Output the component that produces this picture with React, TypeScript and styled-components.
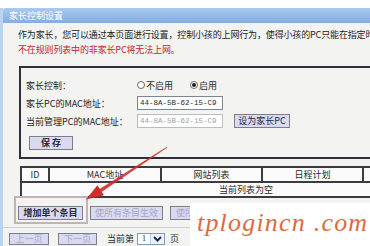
import React from 'react';
import styled, { createGlobalStyle } from 'styled-components';

const GlobalStyle = createGlobalStyle`
  html, body {
    margin: 0;
    padding: 0;
  }
  body {
    width: 370px;
    height: 246px;
    overflow: hidden;
    background: #ffffff;
    font-family: "Noto Sans CJK SC", "Liberation Sans", sans-serif;
  }
`;

const Page = styled.div`
  position: relative;
  width: 370px;
  height: 246px;
  overflow: hidden;
  box-sizing: border-box;
  padding-top: 8px;
  background: #ffffff;
  font-size: 9px;
  color: #2a2a2a;
`;

const Panel = styled.div`
  height: 238px;
  display: flex;
  flex-direction: column;
  background: #f3f3f1;
  border-left: 3px solid #bcd3ee;
`;

const TitleBar = styled.div`
  height: 15px;
  line-height: 15px;
  padding-left: 6px;
  color: #ffffff;
  background: linear-gradient(#a9c9f0, #84ade2);
  border-top-left-radius: 3px;
`;

const Body = styled.div`
  padding: 4px 0 0 15px;
`;

const Intro = styled.p<{ $warn?: boolean }>`
  margin: 0;
  line-height: 15px;
  white-space: nowrap;
  letter-spacing: -0.15px;
  color: ${p => (p.$warn ? '#c4262b' : '#222')};
`;

const ControlBox = styled.div`
  width: 420px;
  margin: 9px 0 0 1px;
  padding: 8px 0 9px 5px;
  border: 2px solid #2e2e38;
  display: grid;
  grid-template-columns: 111px auto;
  grid-auto-rows: 18px;
  align-items: center;
`;

const Label = styled.span`
  white-space: nowrap;
  color: #222;
`;

const Field = styled.div`
  display: flex;
  align-items: center;
`;

const RadioOption = styled.span`
  display: inline-flex;
  align-items: center;
  gap: 1px;
  margin-right: 17px;
`;

const RadioDot = styled.span<{ $checked?: boolean }>`
  width: 8px;
  height: 8px;
  box-sizing: border-box;
  border-radius: 50%;
  border: 1px solid #6a6a6a;
  background: #ffffff;
  display: inline-flex;
  align-items: center;
  justify-content: center;
  &::after {
    content: '';
    width: 4px;
    height: 4px;
    border-radius: 50%;
    background: ${p => (p.$checked ? '#1e1e1e' : 'transparent')};
  }
`;

const MacInput = styled.input<{ $muted?: boolean }>`
  width: 86px;
  height: 14px;
  box-sizing: border-box;
  padding: 0 2px;
  margin: 0;
  border: 1px solid ${p => (p.$muted ? '#b9bcc2' : '#7c8592')};
  background: #ffffff;
  font-family: "Liberation Mono", monospace;
  font-size: 7.5px;
  color: ${p => (p.$muted ? '#a2a2a2' : '#2a2a2a')};
  outline: none;
`;

const Button = styled.button<{ $width: number; $muted?: boolean; $bold?: boolean }>`
  width: ${p => p.$width}px;
  height: 14px;
  padding: 0;
  margin: 0;
  box-sizing: border-box;
  border: 1px solid #7d7d8e;
  background: #d9d9f0;
  font-family: "Noto Sans CJK SC", "Liberation Sans", sans-serif;
  font-size: 9px;
  line-height: 12px;
  font-weight: ${p => (p.$bold ? 700 : 400)};
  color: ${p => (p.$muted ? '#a7a7c9' : '#2a2a3a')};
  white-space: nowrap;
  overflow: hidden;
`;

const SetButton = styled(Button)`
  margin-left: 11px;
`;

const SaveRow = styled.div`
  grid-column: 1 / span 2;
  padding-left: 3px;
  align-self: end;
  margin-bottom: -2px;
`;

const RuleTable = styled.table`
  width: 440px;
  margin: 7px 0 0 2px;
  border-collapse: collapse;
  table-layout: fixed;
  background: #fbfbfb;
  td,
  th {
    height: 13px;
    padding: 0;
    border: 2px solid #3b3b42;
    font-weight: 400;
    font-size: 9px;
    line-height: 11px;
    text-align: center;
    white-space: nowrap;
  }
`;

const EmptyCell = styled.td`
  text-align: left !important;
  padding-left: 197px !important;
`;

const ActionRow = styled.div`
  display: flex;
  gap: 7px;
  margin-top: 8px;
`;

const Callout = styled.span`
  position: relative;
  display: inline-flex;
  &::before {
    content: '';
    position: absolute;
    top: -10px;
    left: -4px;
    right: -5px;
    bottom: -4px;
    border: 2px solid #c2b3b8;
    pointer-events: none;
  }
`;

const Footer = styled.div`
  margin-top: 7px;
  border-top: 1px solid #cfcfcf;
  padding: 4px 0 0 6px;
  display: flex;
  align-items: center;
  white-space: nowrap;
`;

const NavButton = styled(Button)`
  height: 12px;
  line-height: 10px;
  margin-right: 9px;
`;

const PageText = styled.span`
  margin-left: 1px;
`;

const PageSelect = styled.span`
  display: inline-flex;
  align-items: stretch;
  height: 12px;
  box-sizing: border-box;
  margin: 0 5px 0 3px;
  border: 1px solid #7f9db9;
  background: #ffffff;
`;

const SelectValue = styled.span`
  width: 12px;
  font-family: "Liberation Serif", serif;
  font-size: 8px;
  line-height: 10px;
  text-align: center;
`;

const SelectArrow = styled.span`
  width: 13px;
  display: inline-flex;
  align-items: center;
  justify-content: center;
  border-left: 1px solid #b7c6d8;
  background: #eef2f8;
`;

const Watermark = styled.div`
  position: absolute;
  right: 0;
  bottom: 0;
  width: 180px;
  height: 43px;
  background: #ffffff;
  padding-left: 7px;
  box-sizing: border-box;
  font-family: "Liberation Serif", serif;
  font-style: italic;
  font-size: 26px;
  line-height: 40px;
  letter-spacing: 1.2px;
  color: #dd6a41;
  white-space: pre;
`;

const ArrowLayer = styled.svg`
  position: absolute;
  left: 0;
  top: 0;
  pointer-events: none;
`;

export default function App() {
  return (
    <Page>
      <GlobalStyle />
      <Panel>
        <TitleBar>家长控制设置</TitleBar>
        <Body>
          <Intro>作为家长，您可以通过本页面进行设置，控制小孩的上网行为，使得小孩的PC只能在指定时间访问指定的网站。</Intro>
          <Intro $warn>不在规则列表中的非家长PC将无法上网。</Intro>

          <ControlBox>
            <Label>家长控制：</Label>
            <Field>
              <RadioOption>
                <RadioDot />
                不启用
              </RadioOption>
              <RadioOption>
                <RadioDot $checked />
                启用
              </RadioOption>
            </Field>

            <Label>家长PC的MAC地址：</Label>
            <Field>
              <MacInput readOnly value="44-8A-5B-62-15-C9" />
            </Field>

            <Label>当前管理PC的MAC地址：</Label>
            <Field>
              <MacInput $muted readOnly value="44-8A-5B-62-15-C9" />
              <SetButton $width={56}>设为家长PC</SetButton>
            </Field>

            <SaveRow>
              <Button $width={44} $bold>保 存</Button>
            </SaveRow>
          </ControlBox>

          <RuleTable>
            <colgroup>
              <col style={{ width: 28 }} />
              <col style={{ width: 112 }} />
              <col style={{ width: 101 }} />
              <col style={{ width: 101 }} />
              <col />
            </colgroup>
            <thead>
              <tr>
                <th>ID</th>
                <th>MAC地址</th>
                <th>网站列表</th>
                <th>日程计划</th>
                <th>状态</th>
              </tr>
            </thead>
            <tbody>
              <tr>
                <EmptyCell colSpan={5}>当前列表为空</EmptyCell>
              </tr>
            </tbody>
          </RuleTable>

          <ActionRow>
            <Callout>
              <Button $width={65} $bold>增加单个条目</Button>
            </Callout>
            <Button $width={73} $muted>使所有条目生效</Button>
            <Button $width={75} $muted>使所有条目失效</Button>
            <Button $width={67} $muted>删除所有条目</Button>
          </ActionRow>
        </Body>

        <Footer>
          <NavButton $width={40} $muted>上一页</NavButton>
          <NavButton $width={39} $muted>下一页</NavButton>
          <PageText>当前第</PageText>
          <PageSelect>
            <SelectValue>1</SelectValue>
            <SelectArrow>
              <svg width="9" height="6" viewBox="0 0 9 6">
                <path d="M1 1 L4.5 4.5 L8 1" fill="none" stroke="#1d2a44" strokeWidth="2" />
              </svg>
            </SelectArrow>
          </PageSelect>
          <span>页</span>
        </Footer>
      </Panel>

      <Watermark>tplogincn .com</Watermark>

      <ArrowLayer width="370" height="246" viewBox="0 0 370 246">
        <polygon
          points="166.9,146.8 167.3,147.5 101.5,192 99.5,188.9"
          fill="#d22b2b"
          opacity="0.9"
        />
        <polygon points="86,199.5 104,195.2 97.4,185.2" fill="#d22b2b" />
      </ArrowLayer>
    </Page>
  );
}
